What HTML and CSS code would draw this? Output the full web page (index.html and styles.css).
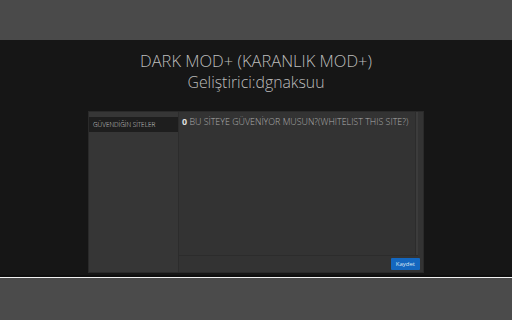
FILE: index.html
```html
<!DOCTYPE html>
<html lang="tr">

<head>
    <meta charset="UTF-8">
    <title>Dark Mod+</title>
    <link rel="stylesheet" href="styles.css">
</head>

<body>
    <div class="topbar"></div>

    <div class="page">
        <h1 class="heading">DARK MOD+ (KARANLIK MOD+)<br><span class="dev">Geliştirici:dgnaksuu</span></h1>

        <div class="panel">
            <div class="sidebar">
                <div class="tab">GÜVENDİĞİN SİTELER</div>
            </div>
            <div class="main">
                <div class="box">
                    <div class="question"><b>0</b> BU SİTEYE GÜVENİYOR MUSUN?(WHITELIST THIS SITE?)</div>
                    <div class="scroll"></div>
                </div>
                <div class="actions">
                    <button class="button">Kaydet</button>
                </div>
            </div>
        </div>
    </div>

    <div class="bottombar"></div>
</body>

</html>
```

FILE: styles.css
```css
body {
    margin: 0;
    padding: 0;
    background-color: #4b4b4b;
    font-family: "Open Sans", Arial, sans-serif;
}

.topbar {
    height: 40px;
    background-color: #4a4a4a;
}

.page {
    height: 237px;
    background-color: #161616;
    border-bottom: 2px solid #0f0f0f;
    padding-top: 10px;
    box-sizing: border-box;
}

.heading {
    margin: 0;
    text-align: center;
    color: #bdbdbd;
    font-weight: 300;
    font-size: 16.5px;
    line-height: 21px;
}

.dev {
    font-size: 15.8px;
}

.panel {
    display: flex;
    width: 334px;
    height: 160px;
    margin: 19px 0 0 89px;
    background-color: #333333;
    box-shadow: 0 0 0 1px #2a2a2a;
}

.sidebar {
    width: 89px;
    padding-top: 5px;
    background-color: #363636;
    border-right: 1px solid #2c2c2c;
}

.tab {
    background-color: #1e1e1e;
    color: #cfcfcf;
    font-size: 6.4px;
    font-weight: 300;
    padding: 4px 4px;
    line-height: 7px;
}

.main {
    flex: 1;
    display: flex;
    flex-direction: column;
}

.box {
    flex: 1;
    display: flex;
    border-bottom: 1px solid #2c2c2c;
    margin-right: 5px;
}

.question {
    flex: 1;
    padding: 5px 3px;
    color: #adadad;
    font-size: 8.9px;
    font-weight: 300;
    line-height: 10px;
}

.question b {
    color: #e0e0e0;
    font-weight: 700;
}

.scroll {
    width: 2px;
    background-color: #3c3c3c;
    border-left: 1px solid #2c2c2c;
}

.actions {
    display: flex;
    justify-content: flex-end;
    padding: 2px 3px 2px 0;
}

.button {
    background-color: #1467bf;
    color: #dce6f2;
    border: none;
    border-radius: 1px;
    font-family: "Open Sans", Arial, sans-serif;
    font-size: 6px;
    padding: 0 5px;
    height: 12px;
    line-height: 12px;
}

.bottombar {
    height: 1px;
    background-color: #f2f2f2;
}
```
